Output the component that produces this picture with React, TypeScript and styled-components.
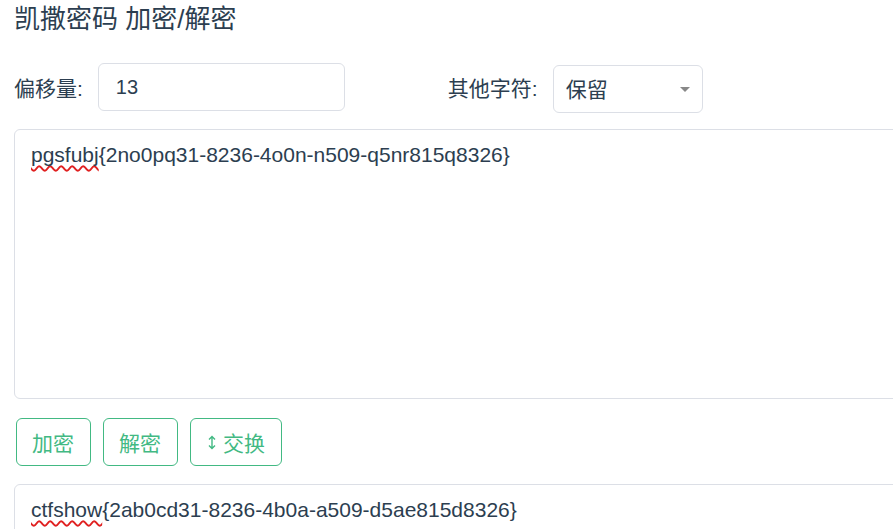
import React from "react";
import styled, { createGlobalStyle } from "styled-components";

const GlobalStyle = createGlobalStyle`
  html, body {
    margin: 0;
    padding: 0;
    background: #fff;
    overflow: hidden;
  }
  body {
    font-family: "Liberation Sans", "Noto Sans CJK SC", sans-serif;
    color: #2c3e50;
  }
`;

const input = "pgsfubj{2no0pq31-8236-4o0n-n509-q5nr815q8326}";
const output = "ctfshow{2ab0cd31-8236-4b0a-a509-d5ae815d8326}";

function Misspelt({ text }: { text: string }) {
  const i = text.indexOf("{");
  return (
    <>
      <Squiggle>{text.slice(0, i)}</Squiggle>
      {text.slice(i)}
    </>
  );
}

function SwapArrow() {
  return (
    <ArrowIcon width="8" height="15" viewBox="0 0 8 15">
      <path
        d="M4 1.5v12M1 4.5l3-3 3 3M1 10.5l3 3 3-3"
        fill="none"
        stroke="currentColor"
        strokeWidth="1.4"
      />
    </ArrowIcon>
  );
}

export default function App() {
  return (
    <>
      <GlobalStyle />
      <Page>
        <Title>凯撒密码 加密/解密</Title>
        <OptionRow>
          <Field>
            <Label>偏移量:</Label>
            <TextInput>13</TextInput>
          </Field>
          <Field $offset={103}>
            <Label>其他字符:</Label>
            <Select>
              保留
              <Caret />
            </Select>
          </Field>
        </OptionRow>
        <TextBox $height={270} $gap={17}>
          <Misspelt text={input} />
        </TextBox>
        <ButtonRow>
          <Button>加密</Button>
          <Button>解密</Button>
          <Button>
            <SwapArrow />
            交换
          </Button>
        </ButtonRow>
        <TextBox $height={120} $gap={18}>
          <Misspelt text={output} />
        </TextBox>
      </Page>
    </>
  );
}

const Page = styled.div`
  width: 1100px;
  padding: 0 0 0 14px;
`;

const Title = styled.h1`
  margin: 0;
  padding-top: 3px;
  font-size: 26px;
  font-weight: 400;
  line-height: 32px;
`;

const OptionRow = styled.div`
  display: flex;
  align-items: center;
  margin-top: 27px;
  height: 50px;
`;

const Field = styled.div<{ $offset?: number }>`
  display: flex;
  align-items: center;
  margin-left: ${p => p.$offset ?? 0}px;
`;

const Label = styled.span`
  font-size: 21px;
  margin-right: 15px;
  white-space: nowrap;
`;

const TextInput = styled.div`
  box-sizing: border-box;
  width: 247px;
  height: 48px;
  padding: 0 17px;
  border: 1px solid #dcdfe6;
  border-radius: 6px;
  font-size: 20px;
  line-height: 46px;
  margin-top: -1px;
`;

const Select = styled.div`
  position: relative;
  box-sizing: border-box;
  width: 150px;
  height: 48px;
  padding: 0 12px;
  border: 1px solid #dcdfe6;
  border-radius: 6px;
  font-size: 21px;
  line-height: 48px;
  margin-top: 3px;
`;

const Caret = styled.span`
  position: absolute;
  right: 12px;
  top: 21px;
  width: 0;
  height: 0;
  border-left: 5px solid transparent;
  border-right: 5px solid transparent;
  border-top: 5px solid #888;
`;

const TextBox = styled.div<{ $height: number; $gap: number }>`
  box-sizing: border-box;
  margin-top: ${p => p.$gap}px;
  width: 1000px;
  height: ${p => p.$height}px;
  padding: 13px 16px;
  border: 1px solid #dcdfe6;
  border-radius: 6px;
  font-size: 21px;
  line-height: 24px;
`;

const Squiggle = styled.span`
  text-decoration: underline wavy #e02020;
  text-decoration-thickness: 1.5px;
  text-decoration-skip-ink: none;
  text-underline-offset: 3px;
`;

const ButtonRow = styled.div`
  display: flex;
  gap: 12px;
  margin: 19px 0 0 2px;
`;

const Button = styled.button`
  display: flex;
  align-items: center;
  gap: 7px;
  height: 48px;
  padding: 0 16px 0 15px;
  background: #fff;
  border: 1px solid #42b983;
  border-radius: 6px;
  color: #42b983;
  font-family: "Liberation Sans", "Noto Sans CJK SC", sans-serif;
  font-size: 21px;
  cursor: pointer;
`;

const ArrowIcon = styled.svg`
  margin-left: 2px;
  flex: none;
`;
